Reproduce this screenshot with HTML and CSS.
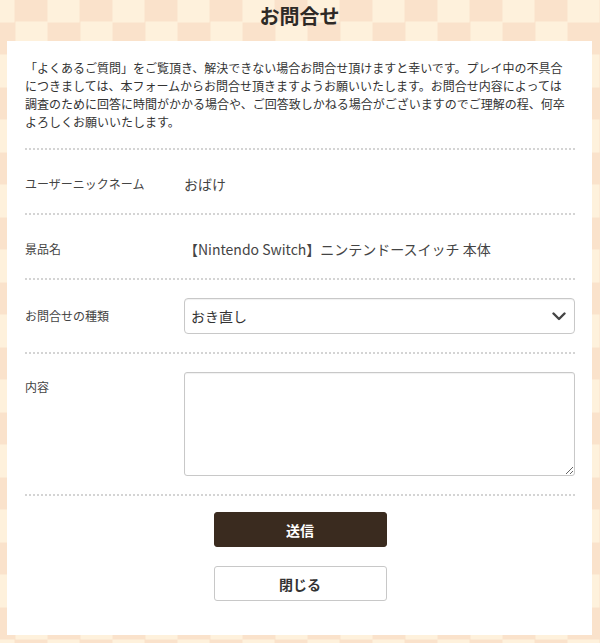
FILE: index.html
```html
<!DOCTYPE html>
<html lang="ja">
<head>
<meta charset="utf-8">
<title>お問合せ</title>
<link rel="stylesheet" href="styles.css">
</head>
<body>
<div class="page">
  <header class="page-header">
    <h1 class="page-title">お問合せ</h1>
  </header>
  <main class="card">
    <p class="intro">「よくあるご質問」をご覧頂き、解決できない場合お問合せ頂けますと幸いです。プレイ中の不具合<br>につきましては、本フォームからお問合せ頂きますようお願いいたします。お問合せ内容によっては<br>調査のために回答に時間がかかる場合や、ご回答致しかねる場合がございますのでご理解の程、何卒<br>よろしくお願いいたします。</p>
    <div class="row row-text">
      <div class="label">ユーザーニックネーム</div>
      <div class="value">おばけ</div>
    </div>
    <div class="row row-text">
      <div class="label">景品名</div>
      <div class="value">【Nintendo Switch】ニンテンドースイッチ 本体</div>
    </div>
    <div class="row row-select">
      <div class="label">お問合せの種類</div>
      <div class="select-wrap">
        <select class="select">
          <option>おき直し</option>
        </select>
        <svg class="chevron" width="14" height="9" viewBox="0 0 14 9"><path d="M1.5 1.5 L7 7 L12.5 1.5" fill="none" stroke="#444" stroke-width="2.4" stroke-linecap="round" stroke-linejoin="round"/></svg>
      </div>
    </div>
    <div class="row row-area">
      <div class="label label-top">内容</div>
      <textarea class="textarea"></textarea>
    </div>
    <div class="actions">
      <button class="btn btn-primary">送信</button>
      <button class="btn btn-secondary">閉じる</button>
    </div>
  </main>
</div>
</body>
</html>
```
FILE: styles.css
```css
* { box-sizing: border-box; }
html, body { margin: 0; padding: 0; }
body {
  font-family: "Noto Sans CJK JP", "Noto Sans", sans-serif;
  color: #333;
  background-color: #fef1dc;
  background-image: repeating-conic-gradient(#fae2cb 0 25%, #fef1dc 0 50%);
  background-size: 65px 65px;
  background-position: -17.5px -10.5px;
  min-height: 643px;
}
.page {
  width: 600px;
  padding: 0 8px 8px 7px;
}
.page-header {
  height: 41px;
}
.page-title {
  margin: 0;
  font-size: 20px;
  line-height: 32px;
  font-weight: 700;
  text-align: center;
  color: #2e2a27;
}
.card {
  background: #fff;
  padding: 18px 17px 34px 18px;
}
.intro {
  margin: 0;
  font-size: 12px;
  line-height: 18px;
  color: #333;
  white-space: nowrap;
  padding-bottom: 17px;
  border-bottom: 2px dotted #d4d4d4;
}
.row {
  display: grid;
  grid-template-columns: 159px 1fr;
  border-bottom: 2px dotted #d4d4d4;
}
.row-text {
  padding: 25px 0 20px;
  line-height: 18px;
}
.row-select {
  padding: 18px 0;
  align-items: center;
}
.row-area {
  padding: 18px 0;
  align-items: start;
}
.label {
  font-size: 12px;
  line-height: 18px;
  color: #444;
}
.label-top { padding-top: 6px; }
.value {
  font-size: 14px;
  line-height: 18px;
  color: #444;
}
.select-wrap {
  position: relative;
}
.select {
  display: block;
  width: 100%;
  height: 36px;
  appearance: none;
  -webkit-appearance: none;
  border: 1px solid #c8c8c8;
  border-radius: 4px;
  background: #fff;
  padding: 0 30px 0 6px;
  font-family: "Noto Sans CJK JP", "Noto Sans", sans-serif;
  font-size: 14px;
  color: #333;
  box-shadow: inset 0 1px 1px rgba(0,0,0,0.06);
}
.chevron {
  position: absolute;
  right: 9px;
  top: 14px;
  pointer-events: none;
}
.textarea {
  display: block;
  width: 100%;
  height: 104px;
  border: 1px solid #c8c8c8;
  border-radius: 3px;
  padding: 6px;
  font-family: "Noto Sans CJK JP", "Noto Sans", sans-serif;
  font-size: 13px;
  resize: vertical;
  box-shadow: inset 0 1px 1px rgba(0,0,0,0.06);
}
.actions {
  display: flex;
  flex-direction: column;
  align-items: center;
  gap: 19px;
  padding-top: 16px;
}
.btn {
  width: 173px;
  height: 35px;
  border-radius: 3px;
  font-family: "Noto Sans CJK JP", "Noto Sans", sans-serif;
  font-size: 14px;
  font-weight: 700;
  cursor: pointer;
}
.btn-primary {
  background: #3a2b1f;
  color: #fff;
  border: 1px solid #3a2b1f;
}
.btn-secondary {
  background: #fff;
  color: #333;
  border: 1px solid #c8c8c8;
}
```
